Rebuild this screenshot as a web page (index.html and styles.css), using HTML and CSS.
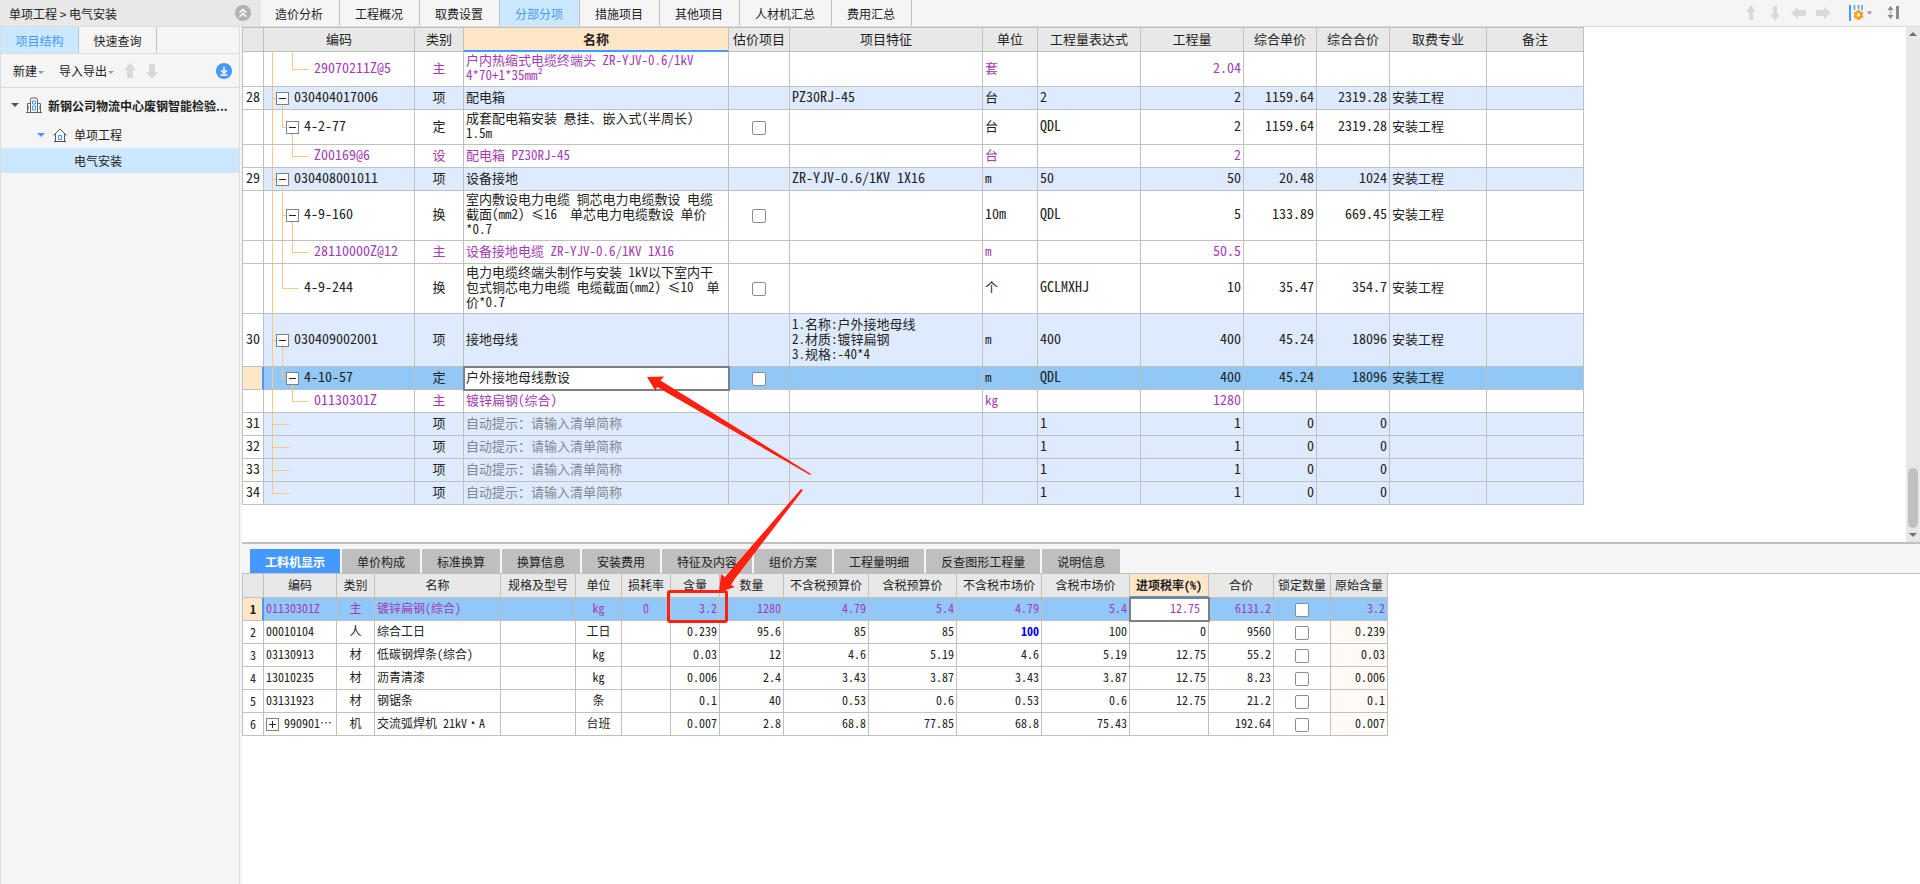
FILE: index.html
```html
<!DOCTYPE html>
<html lang="zh-CN">
<head>
<meta charset="utf-8">
<title>单项工程 &gt; 电气安装</title>
<link rel="stylesheet" href="styles.css">
</head>
<body>
<div class="app">
<header class="topbar">
  <div class="crumb">
    <span>单项工程 &gt; 电气安装</span>
    <button class="icon-btn" aria-label="收起">
      <svg width="16" height="16" viewBox="0 0 16 16"><circle cx="8" cy="8" r="8" fill="#b2b2b2"/><path d="M4.500 7.800 8 4.600l3.500 3.200M4.500 11.800 8 8.600l3.500 3.200" fill="none" stroke="#fff" stroke-width="1.500"/></svg>
    </button>
  </div>
  <nav class="main-tabs">
    <button>造价分析</button><button>工程概况</button><button>取费设置</button><button class="active">分部分项</button><button>措施项目</button><button>其他项目</button><button>人材机汇总</button><button>费用汇总</button>
  </nav>
  <div class="tools">
    <button class="icon-btn" aria-label="上移"><svg width="16" height="16" viewBox="0 0 16 16"><path d="M8 0l5 7h-3v8H6V7H3z" fill="#d9d9d9"/></svg></button>
    <button class="icon-btn" aria-label="下移"><svg width="16" height="16" viewBox="0 0 16 16"><path d="M8 16l5-7h-3V1H6v8H3z" fill="#d9d9d9"/></svg></button>
    <button class="icon-btn" aria-label="左移"><svg width="16" height="16" viewBox="0 0 16 16"><path d="M0 8l7-6v3h8v6H7v3z" fill="#d9d9d9"/></svg></button>
    <button class="icon-btn" aria-label="右移"><svg width="16" height="16" viewBox="0 0 16 16"><path d="M16 8l-7-6v3H1v6h8v3z" fill="#d9d9d9"/></svg></button>
    <button class="icon-btn set" aria-label="列设置"><svg width="26" height="16" viewBox="0 0 26 16"><path d="M1 0v16" stroke="#4499ff" stroke-width="2"/><path d="M5.500 0v5M9.500 0v4M13 0v5" stroke="#4499ff" stroke-width="1.400"/><circle cx="9.500" cy="10" r="3" fill="none" stroke="#ff9c1a" stroke-width="2.600"/><path d="M9.500 5v2M9.500 13v2M5.200 7.500l1.700 1M12.100 11.500l1.700 1M5.200 12.500l1.700-1M12.100 8.500l1.700-1" stroke="#ff9c1a" stroke-width="2.400"/><path d="M18 6.500h5L20.500 9.500z" fill="#8c8c8c"/></svg></button>
    <button class="icon-btn" aria-label="行高"><svg width="12" height="14" viewBox="0 0 12 14"><path d="M3.500 0L6.500 4h-6zM3.500 13L6.500 9h-6z" fill="#8c8c8c"/><path d="M3.500 4v5" stroke="#c8c8c8" stroke-width="2"/><path d="M10.500 0v13" stroke="#8c8c8c" stroke-width="3"/></svg></button>
  </div>
</header>

<div class="body">
<aside class="side">
  <div class="side-tabs"><button class="active">项目结构</button><button>快速查询</button></div>
  <div class="side-tools">
    <button>新建<i class="caret"></i></button>
    <button>导入导出<i class="caret"></i></button>
    <button class="icon-btn" aria-label="上移"><svg width="12" height="16" viewBox="0 0 12 16"><path d="M6 0l6 7H9v8H3V7H0z" fill="#d9d9d9"/></svg></button>
    <button class="icon-btn down" aria-label="下移"><svg width="12" height="16" viewBox="0 0 12 16"><path d="M6 16l6-7H9V1H3v8H0z" fill="#d9d9d9"/></svg></button>
    <button class="icon-btn last" aria-label="下载"><svg width="16" height="16" viewBox="0 0 16 16"><circle cx="8" cy="8" r="8" fill="#4499ff"/><path d="M8 3.500v6.500M5 7.200l3 3 3-3M4.500 12h7" fill="none" stroke="#fff" stroke-width="1.400"/></svg></button>
  </div>
  <ul class="tree">
    <li class="project"><i class="tri dark"></i>
      <svg width="16" height="16" viewBox="0 0 16 16" fill="none"><path d="M0 15.500h16M1.500 15V6.500H4M4.500 15V2.500Q4.500 1 6 1h4q1.500 0 1.500 1.500V15M12 6.500h2.500V15" stroke="#666"/><path d="M6.500 4h3v3h-3zM6.500 9h3v4h-3z" stroke="#4499ff"/><path d="M2.500 9v4M13.500 9v4" stroke="#666" stroke-dasharray="1 1"/></svg>
      <b>新钢公司物流中心废钢智能检验...</b></li>
    <li class="single"><i class="tri blue"></i>
      <svg width="14" height="14" viewBox="0 0 14 14" fill="none"><path d="M0.500 7.500L7 1l6.500 6.500M2.500 6v7.500M11.500 6v7.500M1 13.500h12" stroke="#555"/><path d="M5.500 7.500h3v4h-3z" stroke="#4499ff"/></svg>
      <span>单项工程</span></li>
    <li class="unit">电气安装</li>
  </ul>
</aside>

<main class="main">
<section class="upper">
<div class="grid-wrap">
<table class="grid big">
<colgroup><col class="w21"><col class="w151"><col class="w49"><col class="w265"><col class="w61"><col class="w193"><col class="w55"><col class="w103"><col class="w103"><col class="w73"><col class="w73"><col class="w97"><col class="w97"></colgroup>
<thead><tr><th></th><th>编码</th><th>类别</th><th class="cur">名称</th><th>估价项目</th><th>项目特征</th><th>单位</th><th>工程量表达式</th><th>工程量</th><th>综合单价</th><th>综合合价</th><th>取费专业</th><th>备注</th></tr></thead>
<tbody>
<tr class="h35 mat"><td></td><td class="code l3 v1 v3t"><span>29070211Z@5</span></td><td class="c">主</td><td>户内热缩式电缆终端头 ZR-YJV-0.6/1kV<br>4*70+1*35mm²</td><td></td><td></td><td>套</td><td></td><td class="n">2.04</td><td></td><td></td><td></td><td></td></tr>
<tr class="item"><td class="idx">28</td><td class="code l1 v1 v2b"><button class="box" aria-label="折叠"></button><span>030404017006</span></td><td class="c">项</td><td>配电箱</td><td></td><td class="a">PZ30RJ-45</td><td>台</td><td class="a">2</td><td class="n">2</td><td class="n">1159.64</td><td class="n">2319.28</td><td>安装工程</td><td></td></tr>
<tr class="h35"><td></td><td class="code l2 v1 v2t v3b"><button class="box" aria-label="折叠"></button><span>4-2-77</span></td><td class="c">定</td><td>成套配电箱安装 悬挂、嵌入式(半周长)<br>1.5m</td><td class="chk"><input type="checkbox" aria-label="估价项目 4-2-77"></td><td></td><td>台</td><td class="a">QDL</td><td class="n">2</td><td class="n">1159.64</td><td class="n">2319.28</td><td>安装工程</td><td></td></tr>
<tr class="mat"><td></td><td class="code l3 v1 v3t"><span>Z00169@6</span></td><td class="c">设</td><td>配电箱 PZ30RJ-45</td><td></td><td></td><td>台</td><td></td><td class="n">2</td><td></td><td></td><td></td><td></td></tr>
<tr class="item"><td class="idx">29</td><td class="code l1 v1 v2b"><button class="box" aria-label="折叠"></button><span>030408001011</span></td><td class="c">项</td><td>设备接地</td><td></td><td class="a">ZR-YJV-0.6/1KV 1X16</td><td>m</td><td class="a">50</td><td class="n">50</td><td class="n">20.48</td><td class="n">1024</td><td>安装工程</td><td></td></tr>
<tr class="h50"><td></td><td class="code l2 v1 v2 v3b"><button class="box" aria-label="折叠"></button><span>4-9-160</span></td><td class="c">换</td><td>室内敷设电力电缆 铜芯电力电缆敷设 电缆<br>截面(mm2) ≤16&nbsp; 单芯电力电缆敷设 单价<br>*0.7</td><td class="chk"><input type="checkbox" aria-label="估价项目 4-9-160"></td><td></td><td class="a">10m</td><td class="a">QDL</td><td class="n">5</td><td class="n">133.89</td><td class="n">669.45</td><td>安装工程</td><td></td></tr>
<tr class="mat"><td></td><td class="code l3 v1 v2 v3t"><span>28110000Z@12</span></td><td class="c">主</td><td>设备接地电缆 ZR-YJV-0.6/1KV 1X16</td><td></td><td></td><td>m</td><td></td><td class="n">50.5</td><td></td><td></td><td></td><td></td></tr>
<tr class="h50"><td></td><td class="code l2 leaf v1 v2t"><span>4-9-244</span></td><td class="c">换</td><td>电力电缆终端头制作与安装 1kV以下室内干<br>包式铜芯电力电缆 电缆截面(mm2) ≤10&nbsp; 单<br>价*0.7</td><td class="chk"><input type="checkbox" aria-label="估价项目 4-9-244"></td><td></td><td>个</td><td class="a">GCLMXHJ</td><td class="n">10</td><td class="n">35.47</td><td class="n">354.7</td><td>安装工程</td><td></td></tr>
<tr class="h53 item"><td class="idx">30</td><td class="code l1 v1 v2b"><button class="box" aria-label="折叠"></button><span>030409002001</span></td><td class="c">项</td><td>接地母线</td><td></td><td>1.名称:户外接地母线<br>2.材质:镀锌扁钢<br>3.规格:-40*4</td><td>m</td><td class="a">400</td><td class="n">400</td><td class="n">45.24</td><td class="n">18096</td><td>安装工程</td><td></td></tr>
<tr class="sel"><td class="mark"></td><td class="code l2 v1 v2t v3b"><button class="box" aria-label="折叠"></button><span>4-10-57</span></td><td class="c">定</td><td class="edit"><input type="text" aria-label="名称" value="户外接地母线敷设"></td><td class="chk"><input type="checkbox" aria-label="估价项目 4-10-57"></td><td></td><td>m</td><td class="a">QDL</td><td class="n">400</td><td class="n">45.24</td><td class="n">18096</td><td>安装工程</td><td></td></tr>
<tr class="mat"><td></td><td class="code l3 v1 v3t"><span>01130301Z</span></td><td class="c">主</td><td>镀锌扁钢(综合)</td><td></td><td></td><td>kg</td><td></td><td class="n">1280</td><td></td><td></td><td></td><td></td></tr>
<tr class="item"><td class="idx">31</td><td class="code l1 leaf v1"></td><td class="c">项</td><td class="hint">自动提示：请输入清单简称</td><td></td><td></td><td></td><td class="a">1</td><td class="n">1</td><td class="n">0</td><td class="n">0</td><td></td><td></td></tr>
<tr class="item"><td class="idx">32</td><td class="code l1 leaf v1"></td><td class="c">项</td><td class="hint">自动提示：请输入清单简称</td><td></td><td></td><td></td><td class="a">1</td><td class="n">1</td><td class="n">0</td><td class="n">0</td><td></td><td></td></tr>
<tr class="item"><td class="idx">33</td><td class="code l1 leaf v1"></td><td class="c">项</td><td class="hint">自动提示：请输入清单简称</td><td></td><td></td><td></td><td class="a">1</td><td class="n">1</td><td class="n">0</td><td class="n">0</td><td></td><td></td></tr>
<tr class="item"><td class="idx">34</td><td class="code l1 leaf v1t"></td><td class="c">项</td><td class="hint">自动提示：请输入清单简称</td><td></td><td></td><td></td><td class="a">1</td><td class="n">1</td><td class="n">0</td><td class="n">0</td><td></td><td></td></tr>
</tbody>
</table>
</div>
<div class="scroll"><i class="arr up"></i><i class="thumb"></i><i class="arr dn"></i></div>
</section>

<section class="lower">
<nav class="sub-tabs"><button class="active">工料机显示</button><button>单价构成</button><button>标准换算</button><button>换算信息</button><button>安装费用</button><button>特征及内容</button><button>组价方案</button><button>工程量明细</button><button>反查图形工程量</button><button>说明信息</button></nav>
<div class="grid-wrap low">
<table class="grid small">
<colgroup><col class="w21"><col class="w73"><col class="w38"><col class="w126"><col class="w75"><col class="w46"><col class="w49"><col class="w49"><col class="w64"><col class="w85"><col class="w88"><col class="w85"><col class="w88"><col class="w79"><col class="w65"><col class="w57"><col class="w57"></colgroup>
<thead><tr><th></th><th>编码</th><th>类别</th><th>名称</th><th>规格及型号</th><th>单位</th><th>损耗率</th><th>含量</th><th>数量</th><th>不含税预算价</th><th>含税预算价</th><th>不含税市场价</th><th>含税市场价</th><th class="cur">进项税率(%)</th><th>合价</th><th>锁定数量</th><th>原始含量</th></tr></thead>
<tbody>
<tr class="sel mat"><td class="mark">1</td><td>01130301Z</td><td class="c">主</td><td>镀锌扁钢(综合)</td><td></td><td class="c">kg</td><td class="c">0</td><td class="n">3.2</td><td class="n">1280</td><td class="n">4.79</td><td class="n">5.4</td><td class="n">4.79</td><td class="n">5.4</td><td class="edit num"><input type="text" aria-label="进项税率" value="12.75"></td><td class="n">6131.2</td><td class="chk"><input type="checkbox" aria-label="锁定数量 1"></td><td class="n">3.2</td></tr>
<tr><td class="idx">2</td><td>00010104</td><td class="c">人</td><td>综合工日</td><td></td><td class="c">工日</td><td></td><td class="n">0.239</td><td class="n">95.6</td><td class="n">85</td><td class="n">85</td><td class="n changed">100</td><td class="n">100</td><td class="n">0</td><td class="n">9560</td><td class="chk"><input type="checkbox" aria-label="锁定数量 2"></td><td class="n orig">0.239</td></tr>
<tr><td class="idx">3</td><td>03130913</td><td class="c">材</td><td>低碳钢焊条(综合)</td><td></td><td class="c">kg</td><td></td><td class="n">0.03</td><td class="n">12</td><td class="n">4.6</td><td class="n">5.19</td><td class="n">4.6</td><td class="n">5.19</td><td class="n">12.75</td><td class="n">55.2</td><td class="chk"><input type="checkbox" aria-label="锁定数量 3"></td><td class="n orig">0.03</td></tr>
<tr><td class="idx">4</td><td>13010235</td><td class="c">材</td><td>沥青清漆</td><td></td><td class="c">kg</td><td></td><td class="n">0.006</td><td class="n">2.4</td><td class="n">3.43</td><td class="n">3.87</td><td class="n">3.43</td><td class="n">3.87</td><td class="n">12.75</td><td class="n">8.23</td><td class="chk"><input type="checkbox" aria-label="锁定数量 4"></td><td class="n orig">0.006</td></tr>
<tr><td class="idx">5</td><td>03131923</td><td class="c">材</td><td>钢锯条</td><td></td><td class="c">条</td><td></td><td class="n">0.1</td><td class="n">40</td><td class="n">0.53</td><td class="n">0.6</td><td class="n">0.53</td><td class="n">0.6</td><td class="n">12.75</td><td class="n">21.2</td><td class="chk"><input type="checkbox" aria-label="锁定数量 5"></td><td class="n orig">0.1</td></tr>
<tr><td class="idx">6</td><td class="exp"><button class="box plus" aria-label="展开"></button><span>990901⋯</span></td><td class="c">机</td><td>交流弧焊机 21kV·A</td><td></td><td class="c">台班</td><td></td><td class="n">0.007</td><td class="n">2.8</td><td class="n">68.8</td><td class="n">77.85</td><td class="n">68.8</td><td class="n">75.43</td><td></td><td class="n">192.64</td><td class="chk"><input type="checkbox" aria-label="锁定数量 6"></td><td class="n orig">0.007</td></tr>
</tbody>
</table>
</div>
</section>
</main>
</div>
<svg class="notes" width="160" height="260" viewBox="645 370 160 260" aria-hidden="true">
  <path d="M647 377L664 376.500 660.500 380.500 811 474 810 475 657 387 655.500 391z" fill="#ff2010"/>
  <path d="M719 592L721 574 725 577 801 489 803 490 734 580 731 585 735 587z" fill="#ff2010"/>
  <rect x="668.500" y="591.500" width="58" height="30" rx="1.500" fill="none" stroke="#ff2010" stroke-width="3"/>
</svg>
</div>
</body>
</html>
```
FILE: styles.css
```css
* { box-sizing: border-box; }
body {
  margin: 0;
  background: #f5f5f5;
  color: #222;
  font: 12px/15px "Noto Sans CJK SC", sans-serif;
}
button {
  margin: 0;
  padding: 0;
  border: 0;
  background: none;
  color: inherit;
  font: inherit;
}
svg { display: block; flex: none; }
.app {
  position: relative;
  display: flex;
  flex-direction: column;
  min-height: 100vh;
}
.icon-btn { display: block; }

/* top bar */
.topbar { display: flex; height: 27px; border-bottom: 1px solid #dcdcdc; }
.crumb {
  display: flex;
  align-items: center;
  justify-content: space-between;
  width: 260px;
  padding: 0 8px 0 9px;
  background: #e8e8e8;
  border-right: 1px solid #dcdcdc;
}
.main-tabs { display: flex; flex: 1; }
.main-tabs button {
  padding: 0 16px 0 15px;
  border-right: 1px solid #c0c0c0;
  white-space: nowrap;
}
.main-tabs .active { background: #cce8ff; color: #4499ff; }
.tools {
  display: flex;
  align-items: center;
  gap: 8px;
  padding: 0 21px 0 0;
}
.tools .set { margin: 0 4px 0 10px; }

/* side panel */
.body { display: flex; flex: 1; }
.side {
  flex: none;
  width: 240px;
  margin-right: 2px;
  border: solid #dcdcdc;
  border-width: 0 1px;
}
.side-tabs { display: flex; height: 27px; border-bottom: 1px solid #dcdcdc; }
.side-tabs button { width: 78px; border-right: 1px solid #c0c0c0; }
.side-tabs .active { background: #cce8ff; color: #4499ff; }
.side-tools {
  display: flex;
  align-items: center;
  height: 34px;
  padding: 0 7px 0 12px;
  border-bottom: 1px solid #dcdcdc;
}
.side-tools button { margin-right: 10px; white-space: nowrap; }
.side-tools button:nth-child(2) { margin-left: 5px; }
.side-tools .last { margin: 0 0 0 auto; }
.caret {
  display: inline-block;
  margin: 0 0 2px 1px;
  border: solid transparent;
  border-width: 3px 3px 0;
  border-top-color: #999;
}
.tree { margin: 0; padding: 1px 0 0; list-style: none; }
.tree li { display: flex; align-items: center; white-space: nowrap; }
.tree b { overflow: hidden; }
.project { height: 32px; padding-left: 10px; gap: 6px; }
.single { height: 27px; padding-left: 36px; gap: 7px; }
.tri { margin-right: 1px; border: solid transparent; border-width: 4px 4px 0; }
.unit { height: 25px; padding-left: 73px; background: #cce8ff; }
.tri.dark { border-top-color: #555; }
.tri.blue { border-top-color: #4499ff; }

/* panes */
.main {
  display: flex;
  flex: 1;
  flex-direction: column;
  min-width: 0;
}
.upper { display: flex; background: #fff; border-bottom: 2px solid #c0c0c0; }
.grid-wrap { flex: 1; min-width: 0; padding-bottom: 37px; }
.scroll {
  display: flex;
  flex-direction: column;
  align-items: center;
  width: 14px;
  padding: 5px 0;
  background: #e8e8e8;
}
.arr { border: 4px solid transparent; }
.arr.up { border-top: 0; border-bottom-color: #70707c; }
.arr.dn { border-bottom: 0; border-top-color: #70707c; }
.thumb {
  width: 10px;
  height: 60px;
  margin: auto 0 5px;
  border-radius: 5px;
  background: #c0c0c0;
}
.lower { display: flex; flex: 1; flex-direction: column; }
.sub-tabs {
  display: flex;
  gap: 2px;
  height: 30px;
  padding: 5px 8px 0;
  border-bottom: 1px solid #c0c0c0;
}
.sub-tabs button {
  padding: 0 15px;
  border-radius: 1px 1px 0 0;
  background: #bfbfbf;
  white-space: nowrap;
}
.sub-tabs .active { background: #4499ff; color: #fff; font-weight: bold; }
.low { background: #fff; }

/* grids */
.grid {
  width: 1px;
  table-layout: fixed;
  border-collapse: separate;
  border-spacing: 0;
  border-left: 1px solid #c0c0c0;
  font-family: "Noto Sans Mono CJK SC", "Noto Sans CJK SC", monospace;
}
.w21 { width: 21px; }
.w38 { width: 38px; }
.w46 { width: 46px; }
.w49 { width: 49px; }
.w55 { width: 55px; }
.w57 { width: 57px; }
.w61 { width: 61px; }
.w64 { width: 64px; }
.w65 { width: 65px; }
.w73 { width: 73px; }
.w75 { width: 75px; }
.w79 { width: 79px; }
.w85 { width: 85px; }
.w88 { width: 88px; }
.w97 { width: 97px; }
.w103 { width: 103px; }
.w126 { width: 126px; }
.w151 { width: 151px; }
.w193 { width: 193px; }
.w265 { width: 265px; }
.big { border-top: 1px solid #c0c0c0; font-size: 13px; }
.small { font-size: 12px; }
.grid th, .grid td {
  padding: 0 2px 4px;
  border: solid #c0c0c0;
  border-width: 0 1px 1px 0;
  text-align: left;
  vertical-align: middle;
  white-space: nowrap;
}
.grid th {
  height: 24px;
  padding: 0 0 2px;
  background: #e8e8e8;
  font-weight: normal;
  text-align: center;
}
.grid .cur {
  background: #ffe6c7;
  border-bottom-color: #4499ff;
  box-shadow: inset 0 -1px #4499ff;
  font-weight: bold;
}
.grid td { height: 23px; }
.grid .h35 td { height: 35px; }
.grid .h50 td { height: 50px; }
.grid .h53 td { height: 53px; }
.grid .c { padding: 0 0 4px; text-align: center; }
.grid .chk { padding: 1px 0 0; }
.grid .n { text-align: right; }
.big .n, .big .a, .big .idx, .big .code { font-size: 14px; }
.grid .idx, .grid .mark { padding: 0 0 4px; background: #fff; text-align: center; }
.small .idx, .small .mark { padding-bottom: 1px; }
.item td { background-color: #deeafe; }
.sel td { background-color: #91c8f7; }
.mat td { color: #a43bb4; }
.grid .mark {
  background: #ffe6c7;
  border-right-color: #4499ff;
  box-shadow: inset -1px 0 #4499ff;
  color: #222;
  font-weight: bold;
}
.grid .hint { color: #808890; }
.grid .changed { color: #00f; font-weight: bold; }
.grid .orig { background: #fffaf5; }
.grid .edit {
  padding: 0 0 4px;
  background: #fff;
  outline: 2px solid #808080;
  outline-offset: -1px;
}
.edit input {
  display: block;
  width: 100%;
  height: 15px;
  padding: 0 2px;
  border: 0;
  outline: 0;
  background: none;
  color: inherit;
  font: inherit;
}
.num input { padding-right: 8px; text-align: right; }
.grid input[type="checkbox"] {
  display: block;
  width: 14px;
  height: 14px;
  margin: 0 auto;
  appearance: none;
  border: 1px solid #8c8c8c;
  border-radius: 2px;
  background: #fff;
}

/* outline guides in the code column */
.grid .code {
  --line: linear-gradient(#ffc880, #ffc880);
  padding: 0;
  background-image: var(--line), var(--line), var(--line), var(--line);
  background-repeat: no-repeat;
  background-position: 8px 0, 18px var(--y2, 0), 28px var(--y3, 0), var(--hx) 50%;
  background-size: 1px var(--s1, 0), 1px var(--s2, 0), 1px var(--s3, 0), var(--hw) 1px;
}
.code.v1 { --s1: 100%; }
.code.v1t { --s1: 50%; }
.code.v2 { --s2: 100%; }
.code.v2t { --s2: 50%; }
.code.v2b { --s2: 50%; --y2: 100%; }
.code.v3t { --s3: 50%; }
.code.v3b { --s3: 50%; --y3: 100%; }
.grid .l1 { --hx: 8px; --hw: 5px; padding-left: 12px; }
.grid .l2 { --hx: 18px; --hw: 5px; padding-left: 22px; }
.grid .l3 { --hx: 28px; --hw: 17px; padding-left: 50px; }
.grid .leaf { --hw: 17px; }
.grid .l2.leaf { padding-left: 40px; }
.grid .exp { padding-bottom: 0; }
.code span, .exp span {
  display: inline-block;
  padding-bottom: 4px;
  vertical-align: middle;
}
.box {
  width: 13px;
  height: 13px;
  margin-right: 5px;
  border: 1px solid #808080;
  background: linear-gradient(#222, #222) center / 7px 1px no-repeat #fff;
  vertical-align: middle;
}
.plus {
  background:
    linear-gradient(#222, #222) center / 7px 1px no-repeat,
    linear-gradient(#222, #222) center / 1px 7px no-repeat #fff;
}

/* callouts drawn over the panes */
.notes {
  position: absolute;
  left: 645px;
  top: 370px;
  overflow: visible;
  pointer-events: none;
}
```
